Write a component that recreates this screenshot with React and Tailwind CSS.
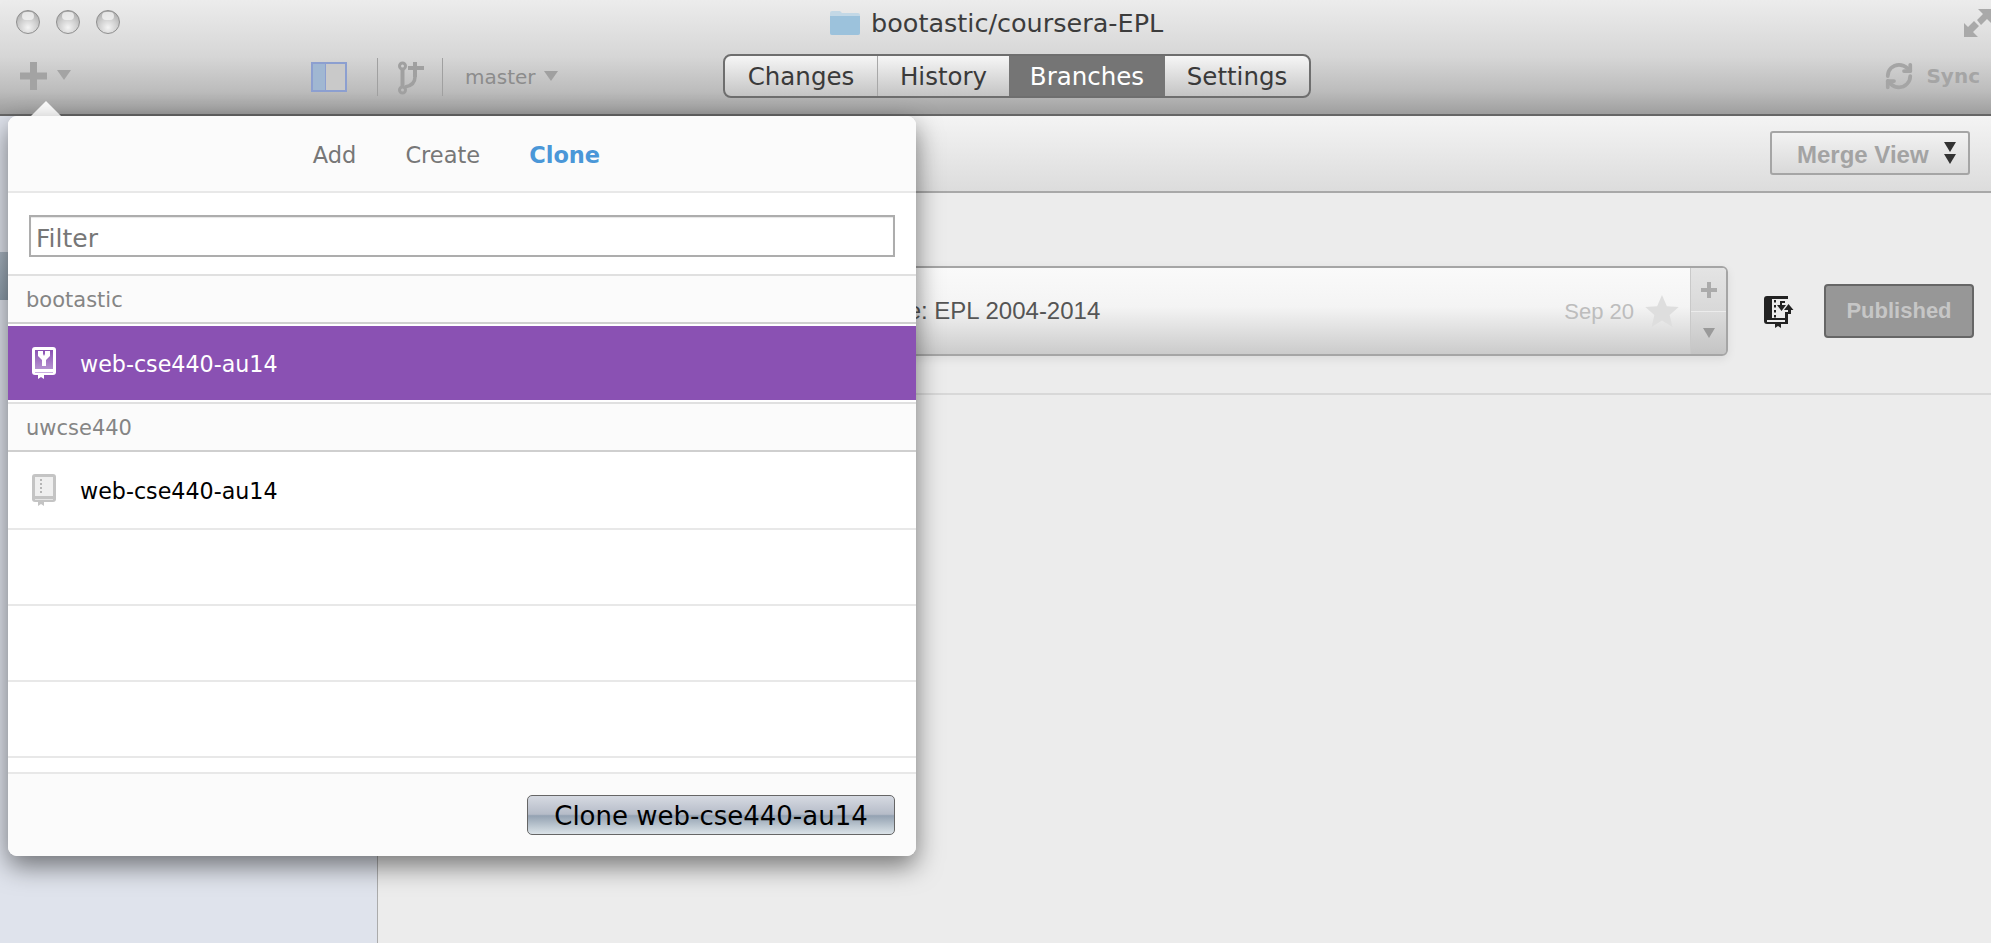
import React from "react";
import { RefreshCw } from "lucide-react";

const sans = "font-['DejaVu_Sans',sans-serif]";
const helv = "font-['Liberation_Sans',sans-serif]";

function Light() {
  return (
    <div className="relative w-[24px] h-[24px] rounded-full border border-[#8f8f8f] bg-[radial-gradient(circle_at_50%_75%,#f4f4f4_0%,#cfcfcf_45%,#9c9c9c_100%)]">
      <div className="absolute left-[5px] top-[1px] w-[12px] h-[8px] rounded-full bg-[#f2f2f2] opacity-80" />
    </div>
  );
}

function Caret({ className }) {
  return <div className={"w-0 h-0 border-x-[7px] border-x-transparent border-t-[10px] " + className} />;
}

function BookIcon({ selected }) {
  if (selected) {
    return (
      <svg width="24" height="32" viewBox="0 0 24 32">
        <defs>
          <linearGradient id="bk" x1="0" y1="0" x2="0" y2="1">
            <stop offset="0" stopColor="#8a51b3" />
            <stop offset="1" stopColor="#b592d0" />
          </linearGradient>
        </defs>
        <rect width="24" height="28" rx="3" fill="#fff" />
        <rect x="3" y="3" width="18" height="19" fill="url(#bk)" />
        <path d="M6 4h5v3l1 2 1-2V4h5v5l-4 4v6h-4v-6L6 9z" fill="#fff" />
        <rect x="3" y="25" width="18" height="1" fill="#c9aee0" />
        <path d="M6 27h6v5l-3-2-3 2z" fill="#fff" />
      </svg>
    );
  }
  return (
    <svg width="24" height="32" viewBox="0 0 24 32">
      <rect width="24" height="28" rx="3" fill="#c4c4c4" />
      <rect x="3" y="3" width="18" height="19" fill="#efefef" />
      <path d="M8 5h2v2H8zM8 9h2v2H8zM8 13h2v2H8zM8 17h2v2H8z" fill="#b5b5b5" />
      <rect x="3" y="25" width="18" height="1" fill="#e6e6e6" />
      <path d="M6 27h6v5l-3-2-3 2z" fill="#c4c4c4" />
    </svg>
  );
}

function Section({ children }) {
  return (
    <div className={"h-[48px] flex items-center pl-[18px] pt-[3px] bg-[#fbfbfb] border-b-2 border-[#cfcfcf] text-[21px] text-[#858585] " + sans}>
      {children}
    </div>
  );
}

function EmptyRow() {
  return <div className="h-[76px] bg-white border-b-2 border-[#e8e8e8]" />;
}

const tabs = [
  ["Changes", "w-[153px] border-r border-[#a8a8a8]"],
  ["History", "w-[131px]"],
  ["Branches", "w-[156px] bg-[#757575] text-white"],
  ["Settings", "w-[144px]"],
];

export default function App() {
  return (
    <div className={"relative w-[1991px] h-[943px] overflow-hidden flex flex-col bg-[#ececec] " + sans}>
      <header className="h-[116px] shrink-0 rounded-tl-[6px] border-b-2 border-[#666] bg-[linear-gradient(#ececec,#d6d6d6_50%,#bcbcbc_80%,#9e9e9e)] flex flex-col">
        <div className="h-[44px] pt-[8px] flex">
          <div className="flex gap-[16px] ml-[16px] mt-[2px]">
            <Light /><Light /><Light />
          </div>
          <div className="ml-[709px] flex items-start gap-[10px]">
            <svg width="32" height="26" viewBox="0 0 32 26" className="mt-[1px]">
              <path d="M1 4a2 2 0 0 1 2-2h8l2 2h16a2 2 0 0 1 2 2v18a2 2 0 0 1-2 2H3a2 2 0 0 1-2-2z" fill="#c3d8e6" />
              <path d="M1 7h30v17a2 2 0 0 1-2 2H3a2 2 0 0 1-2-2z" fill="#9cc2dc" />
            </svg>
            <span className="text-[25.500px] leading-[30px] text-[#3c3c3c]">bootastic/coursera-EPL</span>
          </div>
          <svg width="27" height="28" viewBox="0 0 27 28" className="ml-auto mt-[1px]">
            <path d="M0 28V14l4 4 6-6 5 5-6 6 5 5z" fill="#a9a9a9" />
            <path d="M27 0v14l-4-4-6 6-4-5 6-6-5-5z" fill="#a9a9a9" />
          </svg>
        </div>
        <div className="flex-1 relative flex">
          <div className="flex w-[723px]">
            <svg width="28" height="28" viewBox="0 0 28 28" className="ml-[20px] mt-[18px]">
              <path d="M10 0h7v10.500h10v7H17V28h-7V17.500H0v-7h10z" fill="#a3a3a3" />
            </svg>
            <Caret className="ml-[9px] mt-[26px] border-t-[#a4a4a4]" />
            <div className="ml-[240px] mt-[18px] w-[36px] h-[30px] flex border-2 border-[#8c9fd0]">
              <div className="w-[13px] bg-[#a0b7d2] border-r border-[#8c9fd0]" />
              <div className="flex-1 bg-[#c9c9c9]" />
            </div>
            <div className="ml-[30px] mt-[14px] w-px h-[38px] bg-[#a0a0a0]" />
            <svg width="27" height="34" viewBox="0 0 27 34" className="ml-[20px] mt-[17px]" fill="none" stroke="#a0a0a0" strokeWidth="3">
              <circle cx="4.500" cy="5" r="3" />
              <circle cx="4.500" cy="29" r="3" />
              <path d="M4.500 8v18" strokeWidth="4" />
              <path d="M7 26c6-1 10-4 10-10" strokeWidth="3.500" />
              <path d="M17 1v15M10 7h16" strokeWidth="4" />
            </svg>
            <div className="ml-[17px] mt-[14px] w-px h-[38px] bg-[#a0a0a0]" />
            <span className="ml-[22px] mt-[18px] text-[20px] leading-[30px] text-[#8c8c8c]">master</span>
            <Caret className="ml-[8px] mt-[27px] border-t-[#a0a0a0]" />
          </div>
          <nav className="mt-[10px] h-[44px] flex rounded-[8px] border-2 border-[#6e6e6e] overflow-hidden bg-[linear-gradient(#f6f6f6,#c4c4c4)]">
            {tabs.map(([t, c]) => (
              <div key={t} className={"flex items-center justify-center pt-[2px] text-[24.500px] text-[#3a3a3a] " + c}>{t}</div>
            ))}
          </nav>
          <div className="ml-auto mr-[11px] mt-[18px] h-[28px] flex items-center gap-[12px] text-[#a5a5a5]">
            <RefreshCw size={30} strokeWidth={3} />
            <span className="text-[20px] font-bold">Sync</span>
          </div>
        </div>
      </header>

      <main className="flex-1 flex min-h-0">
        <aside className="w-[378px] shrink-0 bg-[#dfe3ec] border-r border-[#ababab] pt-[136px]">
          <div className="h-[48px] bg-[linear-gradient(#a9b5c1,#8f9fad)]" />
        </aside>
        <section className="flex-1 flex flex-col min-w-0">
          <div className="h-[77px] shrink-0 border-b-2 border-[#a8a8a8] bg-[linear-gradient(#f4f4f4,#dcdcdc)] flex items-center justify-end pr-[21px]">
            <div className={"w-[200px] h-[44px] mb-[2px] rounded-[3px] border-2 border-[#a5a5a5] bg-[linear-gradient(#f2f2f2,#d9d9d9)] flex items-center pl-[25px] font-bold text-[#a3a3a3] text-[24px] " + helv}>
              <span className="pt-[4px]">Merge View</span>
              <div className="ml-[15px] flex flex-col gap-[2px]">
                <div className="w-0 h-0 border-x-[6px] border-x-transparent border-t-[10px] border-t-[#333]" />
                <div className="w-0 h-0 border-x-[6px] border-x-transparent border-t-[10px] border-t-[#333]" />
              </div>
            </div>
          </div>
          <div className="h-[202px] shrink-0 border-b-2 border-[#d8d8d8] pt-[73px] pl-[22px] flex items-start">
            <div className={"w-[1328px] h-[90px] rounded-[6px] border-2 border-[#a5a5a5] shadow-[0_3px_10px_rgba(0,0,0,0.08)] overflow-hidden flex bg-[linear-gradient(#fafafa,#f4f4f4_45%,#cbcbcb)] " + helv}>
              <div className="flex-1 flex items-center justify-end">
                <span className="mr-[464px] text-[24px] text-[#555]">Course: EPL 2004-2014</span>
              </div>
              <span className="self-center text-[22px] text-[#bdbdbd] mr-[11px]">Sep 20</span>
              <svg width="34" height="32" viewBox="0 0 24 23" className="self-center mr-[11px]">
                <path d="M12 0l3.500 8 8.500.7-6.500 5.600 2 8.700L12 18.400 4.500 23l2-8.700L0 8.700 8.500 8z" fill="#dedede" />
              </svg>
              <div className="w-[36px] flex flex-col border-l border-[#c9c9c9]">
                <div className="h-[44px] flex items-center justify-center bg-[linear-gradient(#e4e4e4,#d8d8d8)] border-b border-[#ececec]">
                  <svg width="16" height="16" viewBox="0 0 16 16"><path d="M6 0h4v6h6v4h-6v6H6v-6H0V6h6z" fill="#ababab" /></svg>
                </div>
                <div className="flex-1 flex items-center justify-center bg-[linear-gradient(#dcdcdc,#c4c4c4)]">
                  <div className="w-0 h-0 border-x-[6px] border-x-transparent border-t-[10px] border-t-[#9a9a9a]" />
                </div>
              </div>
            </div>
            <svg width="30" height="33" viewBox="0 0 30 33" className="ml-[36px] mt-[30px]">
              <path d="M3 0h21v28H17v4l-3-2-3 2v-4H3a3 3 0 0 1-3-3V3a3 3 0 0 1 3-3z" fill="#222" />
              <rect x="8" y="3" width="13" height="19" fill="#ececec" />
              <rect x="3" y="24" width="18" height="2" fill="#ececec" />
              <path d="M10 4h2v2.500h-2zM10 9h2v2.500h-2zM10 14h2v2.500h-2zM10 19h2v2.500h-2z" fill="#222" />
              <rect x="21" y="3" width="9" height="14" fill="#ececec" />
              <path d="M16 5h5v2h-3v2h4l-4.500 6L13 9h3z" fill="#222" />
              <path d="M24.500 8l5 6H27v4h-6v-2h3v-2h-4z" fill="#222" />
            </svg>
            <div className={"ml-[30px] mt-[18px] w-[150px] h-[54px] pb-[2px] rounded-[4px] border-2 border-[#666] bg-[#979797] flex items-center justify-center font-bold text-[22px] text-[#c6c6c6] " + helv}>
              Published
            </div>
          </div>
        </section>
      </main>

      {/* popover arrow */}
      <div className="absolute left-[30px] top-[101px] w-0 h-0 border-x-[16px] border-x-transparent border-b-[16px] border-b-[#fbfbfb]" />

      {/* popover */}
      <div className="absolute left-[8px] top-[116px] w-[908px] h-[740px] rounded-[9px] overflow-hidden bg-white shadow-[0_10px_26px_rgba(0,0,0,0.5)] flex flex-col">
        <div className="h-[77px] shrink-0 bg-[#fbfbfb] border-b-2 border-[#e8e8e8] flex items-center justify-center gap-[49px] pr-[11px] pt-[5px] text-[22.500px] text-[#777]">
          <span>Add</span>
          <span>Create</span>
          <span className="font-bold text-[#4a97d8]">Clone</span>
        </div>
        <div className="h-[81px] shrink-0 pt-[22px] px-[21px]">
          <input
            readOnly
            placeholder="Filter"
            className="w-full h-[42px] border-2 border-[#adadad] pl-[5px] pt-[5px] text-[25px] text-[#777] placeholder:text-[#777] outline-none shadow-[inset_0_1px_1px_rgba(0,0,0,0.1)]"
          />
        </div>
        <div className="h-[2px] shrink-0 bg-[#e0e0e0]" />
        <Section>bootastic</Section>
        <div className="mt-[2px] h-[74px] shrink-0 bg-[#8a51b3] flex items-center pl-[24px] gap-[24px] text-[22.200px] text-white">
          <BookIcon selected />
          <span className="pt-[3px]">web-cse440-au14</span>
        </div>
        <div className="mt-[2px] h-[2px] shrink-0 bg-[#e0e0e0]" />
        <Section>uwcse440</Section>
        <div className="h-[78px] shrink-0 border-b-2 border-[#e8e8e8] flex items-center pl-[24px] gap-[24px] text-[22.200px] text-black">
          <BookIcon />
          <span className="pt-[3px]">web-cse440-au14</span>
        </div>
        <EmptyRow />
        <EmptyRow />
        <EmptyRow />
        <div className="h-[14px] shrink-0 bg-white" />
        <div className="flex-1 bg-[#fbfbfb] border-t-2 border-[#e8e8e8] flex justify-end pt-[21px] pr-[21px]">
          <button className="w-[368px] h-[40px] pt-[1px] rounded-[5px] border border-[#666] text-[26px] text-black bg-[linear-gradient(#d6dae2,#b6bcc8_48%,#94a2b2_52%,#dbe3e8)]">
            Clone web-cse440-au14
          </button>
        </div>
      </div>
    </div>
  );
}
